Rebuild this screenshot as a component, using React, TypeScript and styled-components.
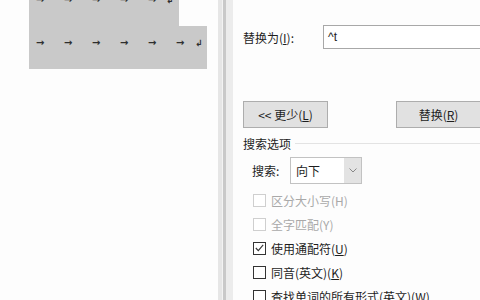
import styled, { createGlobalStyle } from 'styled-components';

const GlobalStyle = createGlobalStyle`
  html, body {
    margin: 0;
    padding: 0;
    background: #fdfdfd;
  }
  body {
    font-family: "Noto Sans CJK SC", "Liberation Sans", sans-serif;
    font-size: 12px;
    color: #1e1e1e;
  }
`;

// Layout
const Page = styled.div`
  display: flex;
  width: 480px;
  height: 300px;
  overflow: hidden;
  background: #fdfdfd;
`;

const DocumentArea = styled.div`
  width: 218px;
  flex-shrink: 0;
  padding-left: 29px;
  box-sizing: border-box;
  display: flex;
  flex-direction: column;
  align-items: flex-start;
`;

// one line of selected text, $pad shifts the tab marks up or down
const SelLine = styled.div<{ $width: number; $height: number; $pad: number }>`
  width: ${p => p.$width}px;
  height: ${p => p.$height}px;
  background: #c9c9c9;
  display: flex;
  align-items: flex-start;
  padding-left: 7px;
  box-sizing: border-box;
  overflow: hidden;
  font-family: "DejaVu Sans", sans-serif;
  font-size: 10px;
  font-weight: bold;
  line-height: 10px;
  color: #2e2e2e;
  & > span {
    margin-top: ${p => p.$pad}px;
  }
`;

const Tab = styled.span<{ $w?: number }>`
  width: ${p => p.$w ?? 28}px;
  flex-shrink: 0;
`;

const Mark = styled.span`
  width: 9px;
  flex-shrink: 0;
  font-size: 9px;
`;

const Divider = styled.div`
  display: flex;
  flex-shrink: 0;
`;

const Stripe = styled.div<{ $w: number; $c: string }>`
  width: ${p => p.$w}px;
  background: ${p => p.$c};
`;

const Dialog = styled.div`
  flex: 1;
  min-width: 0;
  background: #fdfdfd;
  padding-left: 10px;
  display: flex;
  flex-direction: column;
  overflow: hidden;
`;

const FieldRow = styled.div`
  display: flex;
  align-items: center;
  margin-top: 25px;
`;

const Label = styled.span<{ $w: number }>`
  width: ${p => p.$w}px;
  flex-shrink: 0;
  white-space: nowrap;
`;

const Key = styled.span`
  text-decoration: underline;
  text-underline-offset: 1px;
`;

const TextInput = styled.div`
  width: 200px;
  height: 24px;
  flex-shrink: 0;
  border: 1px solid #a8a8a8;
  box-sizing: border-box;
  background: #fff;
  padding-left: 4px;
  display: flex;
  align-items: center;
  font-family: "Liberation Sans", sans-serif;
  font-size: 12px;
`;

const ButtonRow = styled.div`
  display: flex;
  gap: 68px;
  margin-top: 52px;
`;

const Button = styled.div`
  width: 85px;
  height: 27px;
  flex-shrink: 0;
  box-sizing: border-box;
  background: #e1e1e1;
  border: 1px solid #adadad;
  display: flex;
  align-items: center;
  justify-content: center;
  white-space: nowrap;
`;

const SectionHeader = styled.div`
  display: flex;
  align-items: center;
  gap: 4px;
  height: 16px;
  margin-top: 7px;
  &::after {
    content: '';
    flex: 1;
    height: 1px;
    background: #e3e3e3;
  }
`;

const SearchRow = styled.div`
  display: flex;
  align-items: center;
  padding-left: 9px;
  margin-top: 6px;
`;

const Select = styled.div`
  width: 72px;
  height: 27px;
  box-sizing: border-box;
  border: 1px solid #c2c2c2;
  background: #fff;
  display: flex;
`;

const SelectValue = styled.span`
  flex: 1;
  display: flex;
  align-items: center;
  padding-left: 5px;
`;

const SelectArrow = styled.span`
  width: 17px;
  background: #e3e3e3;
  display: flex;
  align-items: center;
  justify-content: center;
`;

const Options = styled.div`
  display: flex;
  flex-direction: column;
  padding-left: 10px;
  margin-top: 4px;
`;

const OptionRow = styled.div<{ $disabled?: boolean }>`
  display: flex;
  align-items: center;
  gap: 5px;
  height: 24px;
  white-space: nowrap;
  color: ${p => (p.$disabled ? '#a9a9a9' : '#1e1e1e')};
`;

const Box = styled.span<{ $disabled?: boolean }>`
  width: 13px;
  height: 13px;
  box-sizing: border-box;
  border: 1px solid ${p => (p.$disabled ? '#cfcfcf' : '#333')};
  background: #fff;
  display: flex;
  align-items: center;
  justify-content: center;
  flex-shrink: 0;
`;

const OPTIONS = [
  { text: '区分大小写(H)', disabled: true },
  { text: '全字匹配(Y)', disabled: true },
  { text: '使用通配符(', key: 'U', checked: true },
  { text: '同音(英文)(', key: 'K' },
  { text: '查找单词的所有形式(英文)(', key: 'W' },
];

function Line({ width, height, pad, tabs, last }: { width: number; height: number; pad: number; tabs: number; last: number }) {
  return (
    <SelLine $width={width} $height={height} $pad={pad}>
      {Array.from({ length: tabs }).map((_, i) => (
        <Tab key={i} $w={i === tabs - 1 ? last : 28}>→</Tab>
      ))}
      <Mark>↲</Mark>
    </SelLine>
  );
}

export default function App() {
  return (
    <>
      <GlobalStyle />
      <Page>
        <DocumentArea>
          <Line width={150} height={26} pad={-5} tabs={5} last={18} />
          <Line width={178} height={43} pad={12} tabs={6} last={19} />
        </DocumentArea>

        <Divider>
          <Stripe $w={4} $c="#e6e6e6" />
          <Stripe $w={1} $c="#f3f3f3" />
          <Stripe $w={3} $c="#c9c9c9" />
          <Stripe $w={7} $c="#ececec" />
        </Divider>

        <Dialog>
          <FieldRow>
            <Label $w={80}>替换为(<Key>I</Key>):</Label>
            <TextInput>^t</TextInput>
          </FieldRow>

          <ButtonRow>
            <Button>&lt;&lt; 更少(<Key>L</Key>)</Button>
            <Button>替换(<Key>R</Key>)</Button>
          </ButtonRow>

          <SectionHeader>搜索选项</SectionHeader>

          <SearchRow>
            <Label $w={38}>搜索:</Label>
            <Select>
              <SelectValue>向下</SelectValue>
              <SelectArrow>
                <svg width="8" height="5" viewBox="0 0 8 5">
                  <path d="M0.5 0.5 L4 4 L7.5 0.5" fill="none" stroke="#888" strokeWidth="1" />
                </svg>
              </SelectArrow>
            </Select>
          </SearchRow>

          <Options>
            {OPTIONS.map(o => (
              <OptionRow key={o.text} $disabled={o.disabled}>
                <Box $disabled={o.disabled}>
                  {o.checked && (
                    <svg width="9" height="8" viewBox="0 0 9 8">
                      <path d="M0.8 4 L3.3 6.6 L8.2 0.9" fill="none" stroke="#333" strokeWidth="1.1" />
                    </svg>
                  )}
                </Box>
                <span>
                  {o.text}
                  {o.key && (
                    <>
                      <Key>{o.key}</Key>)
                    </>
                  )}
                </span>
              </OptionRow>
            ))}
          </Options>
        </Dialog>
      </Page>
    </>
  );
}
